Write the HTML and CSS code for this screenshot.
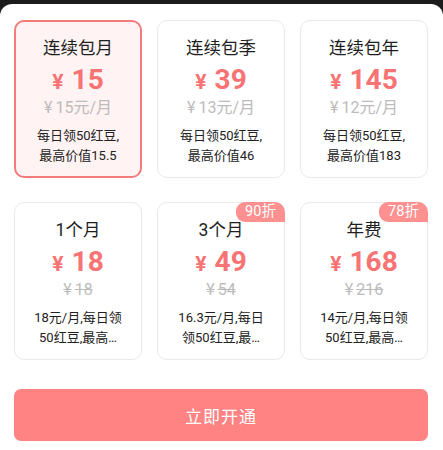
FILE: index.html
```html
<!DOCTYPE html>
<html lang="zh-CN">
<head>
<meta charset="utf-8">
<link rel="stylesheet" href="styles.css">
</head>
<body>
<div class="sheet">
  <div class="grid">
    <div class="card active">
      <div class="title">连续包月</div>
      <div class="price"><span class="yen">¥</span><span class="num">15</span></div>
      <div class="sub"><span class="sy">¥</span>15元/月</div>
      <div class="desc">每日领50红豆,最高价值15.5</div>
    </div>
    <div class="card">
      <div class="title">连续包季</div>
      <div class="price"><span class="yen">¥</span><span class="num">39</span></div>
      <div class="sub"><span class="sy">¥</span>13元/月</div>
      <div class="desc">每日领50红豆,最高价值46</div>
    </div>
    <div class="card">
      <div class="title">连续包年</div>
      <div class="price"><span class="yen">¥</span><span class="num">145</span></div>
      <div class="sub"><span class="sy">¥</span>12元/月</div>
      <div class="desc">每日领50红豆,最高价值183</div>
    </div>
    <div class="card">
      <div class="title">1个月</div>
      <div class="price"><span class="yen">¥</span><span class="num">18</span></div>
      <div class="sub strike"><span class="sy">¥</span>18</div>
      <div class="desc">18元/月,每日领50红豆,最高…</div>
    </div>
    <div class="card">
      <div class="badge">90折</div>
      <div class="title">3个月</div>
      <div class="price"><span class="yen">¥</span><span class="num">49</span></div>
      <div class="sub strike"><span class="sy">¥</span>54</div>
      <div class="desc">16.3元/月,每日领50红豆,最…</div>
    </div>
    <div class="card">
      <div class="badge">78折</div>
      <div class="title">年费</div>
      <div class="price"><span class="yen">¥</span><span class="num">168</span></div>
      <div class="sub strike"><span class="sy">¥</span>216</div>
      <div class="desc">14元/月,每日领50红豆,最高…</div>
    </div>
  </div>
  <button class="cta">立即开通</button>
</div>
</body>
</html>
```
FILE: styles.css
```css
* { box-sizing: border-box; }
html, body { margin: 0; padding: 0; }
body {
  background: #1c1c1c;
  font-family: Roboto, "Noto Sans CJK SC", sans-serif;
  width: 443px;
  height: 450px;
  overflow: hidden;
}
.sheet {
  margin-top: 4px;
  height: 446px;
  background: #ffffff;
  border-radius: 12px 12px 0 0;
  padding: 16px 15px 0 14px;
}
.grid {
  display: grid;
  grid-template-columns: repeat(3, 128px);
  grid-auto-rows: 158px;
  column-gap: 15px;
  row-gap: 24px;
}
.card {
  position: relative;
  border: 1px solid #e9e9e9;
  border-radius: 10px;
  background: #ffffff;
  padding: 15px 10px 0;
  display: flex;
  flex-direction: column;
  align-items: center;
  text-align: center;
}
.card.active {
  border: 2px solid #f27b7b;
  background: #fff3f3;
  padding: 14px 9px 0;
}
.title {
  font-size: 17.5px;
  line-height: 24px;
  color: #1f1f1f;
}
.price {
  margin-top: 4px;
  height: 32px;
  line-height: 32px;
  color: #f87373;
  font-weight: 700;
  display: flex;
  align-items: baseline;
}
.yen {
  font-size: 21px;
  margin-right: 8px;
}
.num {
  font-size: 28px;
}
.sub {
  font-size: 16px;
  line-height: 24px;
  color: #bcbcbc;
}
.sy {
  margin-right: 3px;
}
.strike {
  text-decoration: line-through;
}
.desc {
  margin-top: 6px;
  width: 94px;
  font-size: 13px;
  line-height: 20px;
  color: #222222;
}
.badge {
  position: absolute;
  top: -1px;
  right: -1px;
  width: 49px;
  height: 20px;
  background: #ff9090;
  color: #ffffff;
  font-size: 14.5px;
  line-height: 20px;
  text-align: center;
  border-radius: 9px 10px 0 9px;
}
.cta {
  display: block;
  margin-top: 29px;
  width: 414px;
  height: 52px;
  border: none;
  border-radius: 7px;
  background: #ff8383;
  color: #ffffff;
  font-family: Roboto, "Noto Sans CJK SC", sans-serif;
  font-size: 17px;
  letter-spacing: 1px;
}
```
